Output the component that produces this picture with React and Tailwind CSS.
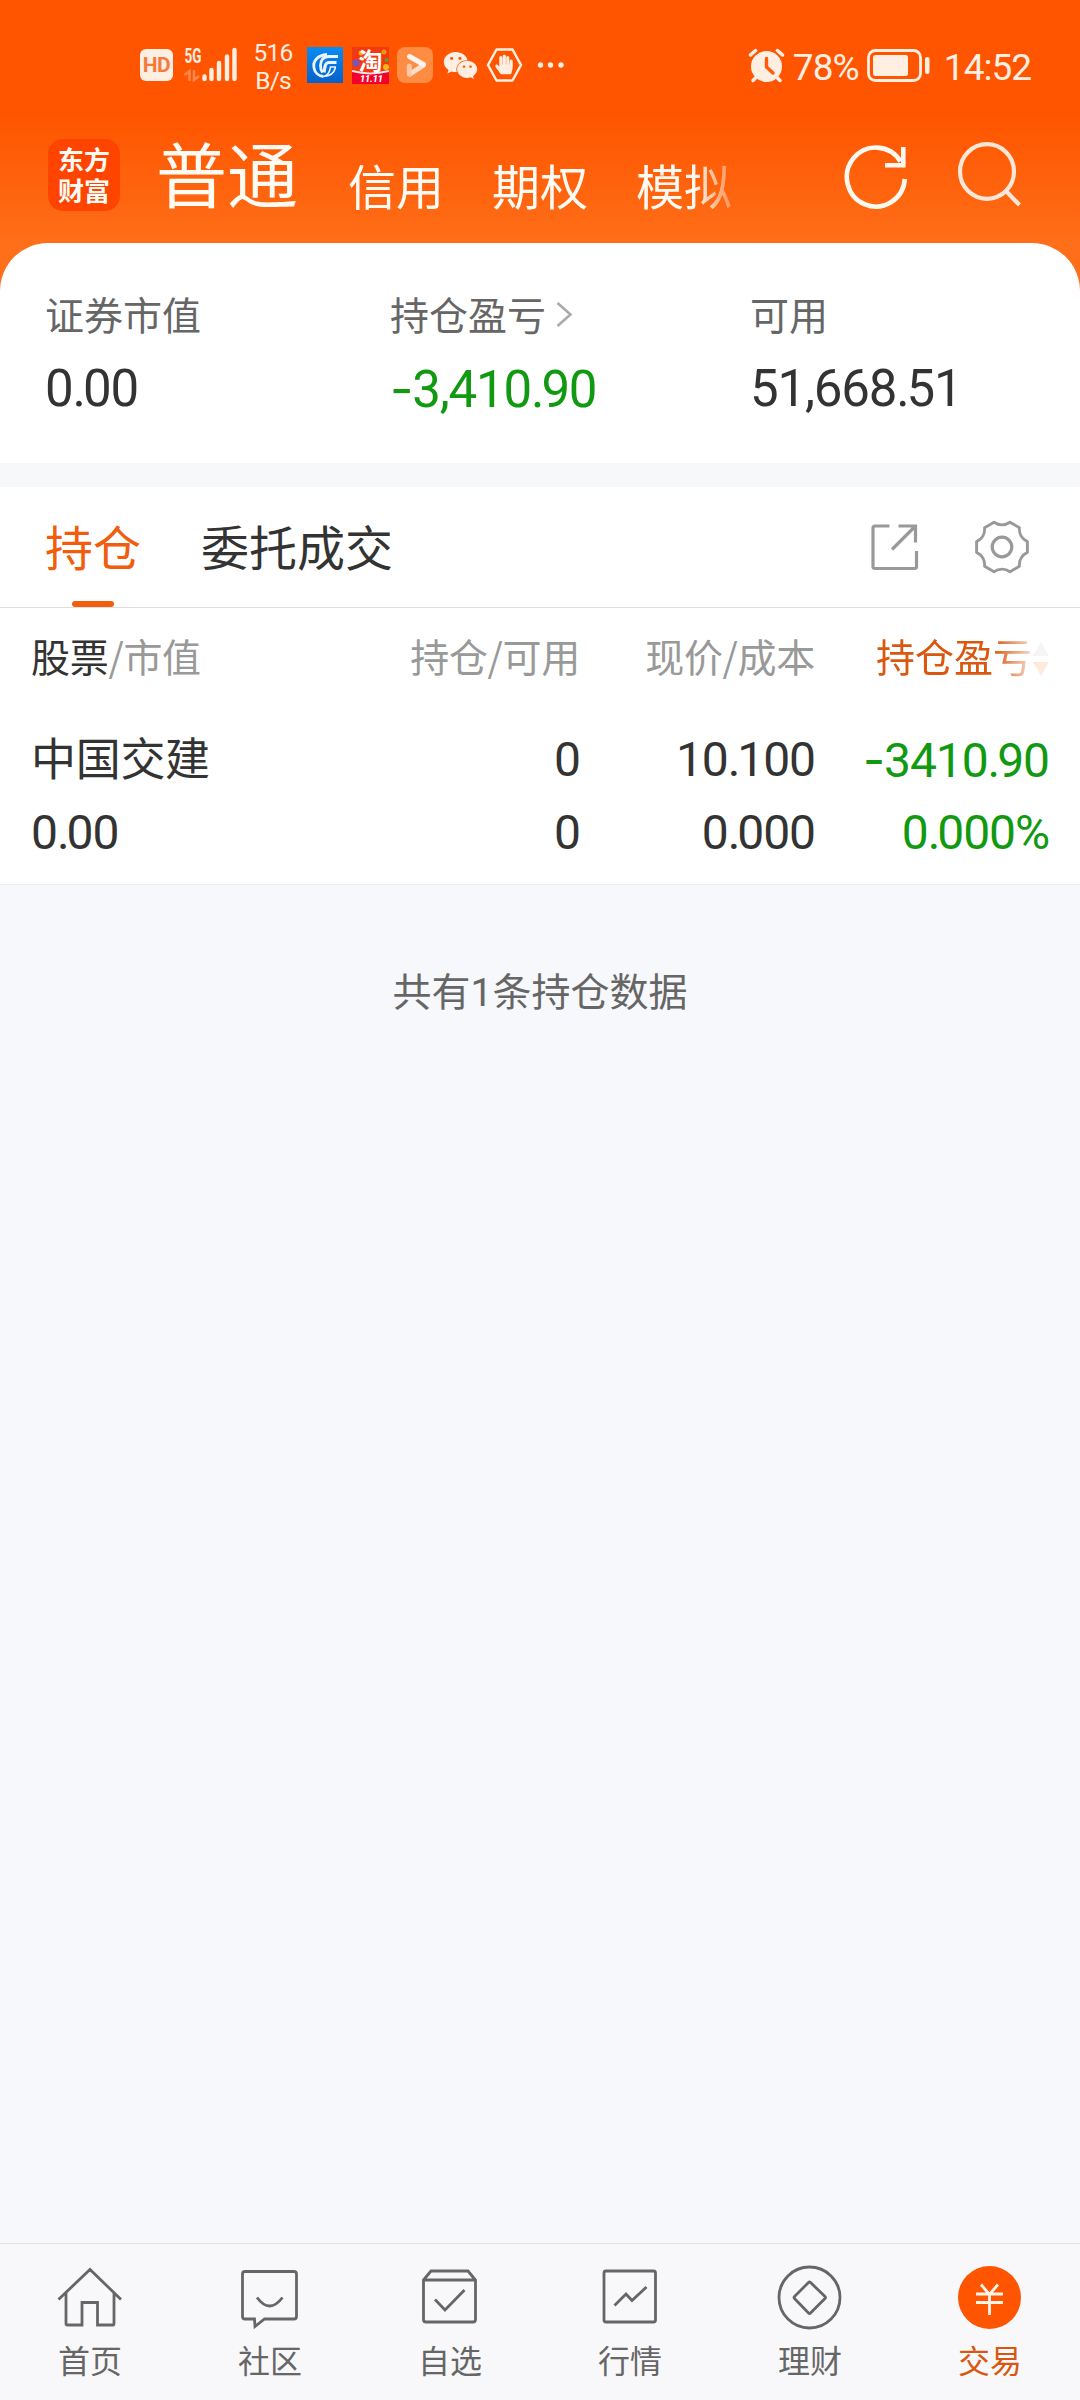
import React from "react";
import { FaWeixin, FaHandPaper } from "react-icons/fa";

const cjk = "font-['Noto_Sans_CJK_SC',sans-serif]";
const num = "font-['Roboto','Noto_Sans_CJK_SC',sans-serif]";

// Amount with a wider minus sign and a tighter decimal point.
function Amount({ value }) {
  const negative = value.startsWith("-");
  const [whole, decimals] = (negative ? value.slice(1) : value).split(".");
  return (
    <>
      {negative && <span className="font-['Inter',sans-serif]">-</span>}
      {whole}
      {decimals && <span className="tracking-[-3px]">.</span>}
      {decimals}
    </>
  );
}

function StatusBar() {
  return (
    <div className={`flex h-[130px] items-start pl-[140px] pr-[49px] pt-[43px] text-[#ffeee2] ${num}`}>
      <div className="mt-[6px] flex h-[32px] w-[33px] items-center justify-center rounded-[6px] bg-[#ffeee2] text-[21px] font-bold leading-[32px] tracking-[-0.500px] text-[#f57a3c]">
        HD
      </div>
      <svg className="ml-[11px] mt-[3px] h-[38px] w-[55px]" viewBox="184 46 55 38">
        <text x="184.500" y="63" fontFamily="Roboto" fontWeight="700" fontSize="20" textLength="17" lengthAdjust="spacingAndGlyphs" fill="#ffeee2">5G</text>
        <g stroke="#ffeee2" strokeWidth="2.500" fill="none" opacity=".35">
          <path d="M184.500 75l5-4v10M194 70v10l5-4" />
        </g>
        <g stroke="#ffeee2" strokeWidth="4.400" strokeLinecap="round">
          <path d="M204.500 76.500V79M211.500 70v9M219 63v16M227 56.500V79M234.500 50v29" />
        </g>
      </svg>
      <div className="ml-[9px] mt-[-4px] flex w-[50px] flex-col items-center text-[24.500px] leading-[28px] tracking-[-0.800px]">
        <span>516</span>
        <span>B/s</span>
      </div>
      <svg className="ml-[9px] mt-[4px] size-[36px]" viewBox="0 0 36 36">
        <defs>
          <linearGradient id="blue" x1="0" y1="0" x2="0" y2="1">
            <stop offset="0" stopColor="#0b8cf5" />
            <stop offset="1" stopColor="#0560c8" />
          </linearGradient>
        </defs>
        <rect width="36" height="36" fill="url(#blue)" />
        <g fill="none" stroke="#eaf5ff">
          <path d="M20 7.500C11 8 5.500 14 7 21c.8 4.500 4.500 8 9.500 8.500" strokeWidth="2.800" />
          <path d="M31 9.500H22c-6 0-8.500 4-8.500 9 0 3 .5 5 2 7" strokeWidth="2.800" />
          <path d="M29.500 15.500H22c-3.500 0-4 3-5 10" strokeWidth="3.200" />
          <path d="M29 20h-5.500c-.5 4-2 8-7 9.500 6-.3 10.500-3 12-9" strokeWidth="1.600" />
        </g>
      </svg>
      <svg className="ml-[9px] mt-[4px] size-[37px]" viewBox="0 0 37 37">
        <rect width="37" height="37" fill="#f23a12" />
        <rect y="25" width="37" height="12" fill="#f5002d" />
        <circle cx="4" cy="16" r="3.500" fill="#7459b8" />
        <circle cx="9" cy="6" r="2.500" fill="#ffae18" />
        <circle cx="34" cy="20" r="3" fill="#f5b51b" />
        <circle cx="32" cy="5" r="2.500" fill="#e89718" />
        <circle cx="34.500" cy="13" r="2" fill="#639b35" />
        <path d="M0 24q18 5 37 0" stroke="#ffe5df" strokeWidth="2" fill="none" />
        <text x="6.500" y="22.500" fontSize="24" fontWeight="700" fontFamily="Noto Sans CJK SC" fill="#fff">淘</text>
        <text x="8" y="34.500" fontSize="9" fontWeight="900" fontStyle="italic" fontFamily="Roboto" fill="#fff">11.11</text>
      </svg>
      <svg className="ml-[8px] mt-[4px] size-[36px]" viewBox="0 0 36 36">
        <rect width="36" height="36" rx="8" fill="#ff8c43" />
        <path d="M26 18.500L13 27" stroke="#ffe0cc" strokeWidth="5" strokeLinecap="round" />
        <path d="M12.300 19V27" stroke="#ffc9a8" strokeWidth="5" strokeLinecap="round" />
        <path d="M12.500 9.500L26.500 17.500" stroke="#fff3eb" strokeWidth="5" strokeLinecap="round" />
      </svg>
      <FaWeixin className="ml-[10px] mt-[5px] size-[35px]" />
      <svg className="ml-[8px] mt-[4px] h-[36px] w-[37px]" viewBox="0 0 37 36">
        <path d="M10.500 2.500h16L35 18l-8.500 15.500h-16L2 18z" fill="none" stroke="#ffeee2" strokeWidth="2.500" strokeLinejoin="round" />
        <FaHandPaper x="8" y="7.500" size="20" color="#ffeee2" />
      </svg>
      <svg className="ml-[14px] mt-[18px] h-[8px] w-[28px]" viewBox="0 0 28 8">
        <circle cx="3.500" cy="4" r="2.700" fill="#ffeee2" />
        <circle cx="13.500" cy="4" r="2.700" fill="#ffeee2" />
        <circle cx="24" cy="4" r="2.700" fill="#ffeee2" />
      </svg>
      <div className="ml-auto flex items-start">
        <svg className="mt-[5px] h-[35px] w-[37px]" viewBox="0 0 37 35">
          <circle cx="18.500" cy="18.500" r="15.500" fill="#ffeee2" />
          <path d="M2.500 7l5-4.500M34.500 7l-5-4.500M5 32.500l3-3M32 32.500l-3-3" stroke="#ffeee2" strokeWidth="3.500" strokeLinecap="round" />
          <path d="M18.500 10.500v8.500l6.500 6" fill="none" stroke="#ff5a05" strokeWidth="3.400" strokeLinecap="round" />
        </svg>
        <span className="ml-[8px] w-[73px] text-[37px] leading-[49px] tracking-[-1px]">78%</span>
        <svg className="mt-[5px] h-[35px] w-[65px]" viewBox="0 0 65 35">
          <rect x="2.500" y="2.500" width="52" height="30" rx="7" fill="none" stroke="#ffeee2" strokeWidth="2.800" />
          <rect x="7" y="7" width="35" height="21" rx="2.500" fill="#ffeee2" />
          <rect x="59" y="9" width="4.500" height="17" rx="2" fill="#ffeee2" />
        </svg>
        <span className="ml-[13px] text-[37px] leading-[49px] tracking-[-1px]">14:52</span>
      </div>
    </div>
  );
}

function TopTabs() {
  return (
    <div className="flex h-[113px] items-start pl-[48px] text-[#fffaf4]">
      <div className="mt-[9px] flex size-[72px] flex-col items-center justify-center rounded-[15px] bg-[#ff4400] pb-[3px] text-[26px] font-bold leading-[31px]">
        <span>东方</span>
        <span>财富</span>
      </div>
      <span className="ml-[36px] mt-[1px] w-[192px] text-[71px] leading-[80px]">普通</span>
      <div className="mt-[18px] flex w-[396px] gap-[48px] text-[48px] leading-[72px] [mask-image:linear-gradient(to_right,black_345px,transparent_400px)]">
        <span className="shrink-0">信用</span>
        <span className="shrink-0">期权</span>
        <span className="shrink-0">模拟</span>
      </div>
      <svg className="ml-[98px] mt-[12px] h-[68px] w-[68px]" viewBox="842 142 68 68" fill="none" stroke="#fff8ee" strokeWidth="4.600">
        <path d="M904.800 179A29 29.500 0 1 1 900.500 161.500" />
        <path d="M903.300 147v18.300H885" />
      </svg>
      <svg className="ml-[44px] mt-[9px] h-[70px] w-[70px]" viewBox="954 139 70 70" fill="none" stroke="#ffe6d6" strokeWidth="4.200">
        <ellipse cx="987" cy="171.500" rx="27" ry="27.300" />
        <path d="M1005.500 190.500l14 14.500" />
      </svg>
    </div>
  );
}

const amountClass = `mt-[17px] text-[51px] leading-[60px] tracking-[-1.200px] ${num}`;

function Summary() {
  return (
    <div className="flex h-[220px] rounded-t-[48px] bg-white pl-[45px] pt-[42px]">
      <div className="w-[345px]">
        <div className="text-[39px] leading-[57px] text-[#666]">证券市值</div>
        <div className={`text-[#333] ${amountClass}`}><Amount value="0.00" /></div>
      </div>
      <div className="w-[360px]">
        <div className="flex text-[39px] leading-[57px] text-[#666]">
          持仓盈亏
          <svg className="ml-[10px] mt-[16px] h-[28px] w-[18px]" viewBox="0 0 18 28" fill="none" stroke="#aaa" strokeWidth="2.600">
            <path d="M1.500 2L14.500 13.500 1.500 25" />
          </svg>
        </div>
        <div className={`text-[#129912] ${amountClass}`}><Amount value="-3,410.90" /></div>
      </div>
      <div>
        <div className="text-[39px] leading-[57px] text-[#666]">可用</div>
        <div className={`text-[#333] ${amountClass}`}><Amount value="51,668.51" /></div>
      </div>
    </div>
  );
}

function SectionTabs() {
  return (
    <div className="flex h-[121px] items-start border-b border-[#dedede] bg-white pl-[45px] pr-[49px] text-[48px] leading-[60px]">
      <div className="flex w-[96px] flex-col items-center pt-[28px] text-[#f25c0d]">
        持仓
        <div className="mt-[26px] h-[6px] w-[42px] rounded-full bg-[#f25c0d]" />
      </div>
      <span className="ml-[60px] pt-[28px] text-[#333]">委托成交</span>
      <svg className="ml-auto mt-[35px] size-[50px]" viewBox="869 522 50 50" fill="none" stroke="#999" strokeWidth="3.200">
        <path d="M889.500 526H875q-2 0-2 2v38.500q0 2 2 2h39.500q2 0 2-2V551M898.500 526h17v16.500M892 549.500L915.500 526" />
      </svg>
      <svg className="ml-[54px] mt-[31px] size-[58px]" viewBox="-29 -29 58 58" fill="none" stroke="#999" strokeWidth="2.900" strokeLinejoin="round">
        <path d="M25.400 5.400A14 14 0 0 0 17.400 19.300L8 24.700A14 14 0 0 0-8 24.700L-17.400 19.300A14 14 0 0 0-25.400 5.400V-5.400A14 14 0 0 0-17.400-19.300L-8-24.700A14 14 0 0 0 8-24.700L17.400-19.300A14 14 0 0 0 25.400-5.400Z" />
        <circle r="9.800" strokeWidth="3.200" />
      </svg>
    </div>
  );
}

const columns = "grid grid-cols-[314px_235px_235px_234px] pl-[31px] text-right";
const figures = `text-[48px] leading-[74px] tracking-[-1.100px] ${num}`;

function Holdings() {
  return (
    <div className="h-[277px] border-b border-[#ebedf0] bg-white text-[#333]">
      <div className={`${columns} h-[115px] pt-[19px] text-[39px] leading-[57px] text-[#999]`}>
        <span className="text-left tracking-[-0.300px]">
          <span className="text-[#333]">股票</span>/市值
        </span>
        <span className="tracking-[-0.300px]">持仓/可用</span>
        <span className="tracking-[-0.300px]">现价/成本</span>
        <span className="flex justify-end text-[#d9570f] [mask-image:linear-gradient(to_right,black_178px,rgba(0,0,0,.12)_222px)]">
          持仓盈亏
          <svg className="ml-[1px] mt-[14px] h-[36px] w-[16px]" viewBox="0 0 16 36">
            <path d="M8 1l8 14H0z" fill="#aaa" />
            <path d="M8 35l8-14H0z" fill="#ff5500" />
          </svg>
        </span>
      </div>
      <div className={`${columns} h-[73px] ${figures}`}>
        <span className={`text-left text-[45px] leading-[68px] tracking-[-0.300px] ${cjk}`}>中国交建</span>
        <span><Amount value="0" /></span>
        <span><Amount value="10.100" /></span>
        <span className="text-[#129912]"><Amount value="-3410.90" /></span>
      </div>
      <div className={`${columns} h-[74px] ${figures}`}>
        <span className="text-left"><Amount value="0.00" /></span>
        <span><Amount value="0" /></span>
        <span><Amount value="0.000" /></span>
        <span className="text-[#129912]"><Amount value="0.000%" /></span>
      </div>
    </div>
  );
}

const navItems = [
  {
    label: "首页",
    icon: <path d="M58.500 2299.500L90 2269.500l31 30M66 2293v30.500q0 1.500 1.500 1.500H82v-22.500h15.500V2325H113q1 0 1-1.500V2293" transform="translate(-90 -2297)" />,
  },
  {
    label: "社区",
    icon: (
      <g transform="translate(-270 -2297)">
        <path d="M245 2271.500h49q2.500 0 2.500 2.500v42.500q0 2.500-2.500 2.500h-29.500l-9.500 7.500-.5-7.500H245q-2.500 0-2.500-2.500V2274q0-2.500 2.500-2.500z" />
        <path d="M257 2297.500q12.500 17 25.500 0" />
      </g>
    ),
  },
  {
    label: "自选",
    icon: (
      <path transform="translate(-450 -2297)" d="M423.500 2280l7.500-9h37l7.500 9v39.500q0 2.500-2.500 2.500h-47q-2.500 0-2.500-2.500zM423.500 2280h52M435 2299.500l10 10.500 19.500-20" />
    ),
  },
  {
    label: "行情",
    icon: (
      <g transform="translate(-630 -2297)">
        <rect x="604" y="2271" width="51.500" height="51" rx="2" />
        <path d="M614.500 2305.500l11.500-11.500 6 6.500 14.500-13.500" />
      </g>
    ),
  },
  {
    label: "理财",
    icon: (
      <g>
        <circle cx="-.5" cy=".5" r="30.500" />
        <path d="M-1.500-14.500q1-1 2 0L15-.5q1 1 0 2L.5 16q-1 1-2 0L-15.500 1.500q-1-1 0-2z" />
      </g>
    ),
  },
  {
    label: "交易",
    active: true,
    icon: (
      <g>
        <circle cx="-.5" cy=".5" r="31.500" fill="#ff5500" stroke="none" />
        <path d="M-9-12.500L-.5-2.500 8-12.500M-14-3h27M-14 5.500h27M-.5-3v21" stroke="#fff4ea" />
      </g>
    ),
  },
];

function BottomNav() {
  return (
    <nav className="grid h-[157px] grid-cols-6 border-t border-[#e2e3e5] bg-[#f8f8fa]">
      {navItems.map((item) => (
        <div key={item.label} className={`flex flex-col items-center pt-[19px] ${item.active ? "text-[#d9570f]" : "text-[#666]"}`}>
          <svg className="h-[68px] w-[70px]" viewBox="-35 -34 70 68" fill="none" stroke="currentColor" strokeWidth="2.800">
            {item.icon}
          </svg>
          <span className="mt-[5px] text-[32px] leading-[46px]">{item.label}</span>
        </div>
      ))}
    </nav>
  );
}

export default function App() {
  return (
    <div className={`flex h-[2400px] w-[1080px] flex-col overflow-hidden bg-[#f6f8fb] ${cjk}`}>
      <header className="bg-[linear-gradient(to_bottom,#ff5500_0px,#ff5500_115px,#ff6e18_243px,#ff6e18_300px)]">
        <StatusBar />
        <TopTabs />
        <Summary />
      </header>
      <div className="h-[24px] bg-[#f7f8fa]" />
      <SectionTabs />
      <Holdings />
      <div className="mt-[76px] text-center text-[39px] leading-[57px] text-[#666]">
        共有<span className={num}>1</span>条持仓数据
      </div>
      <div className="flex-1" />
      <BottomNav />
    </div>
  );
}
